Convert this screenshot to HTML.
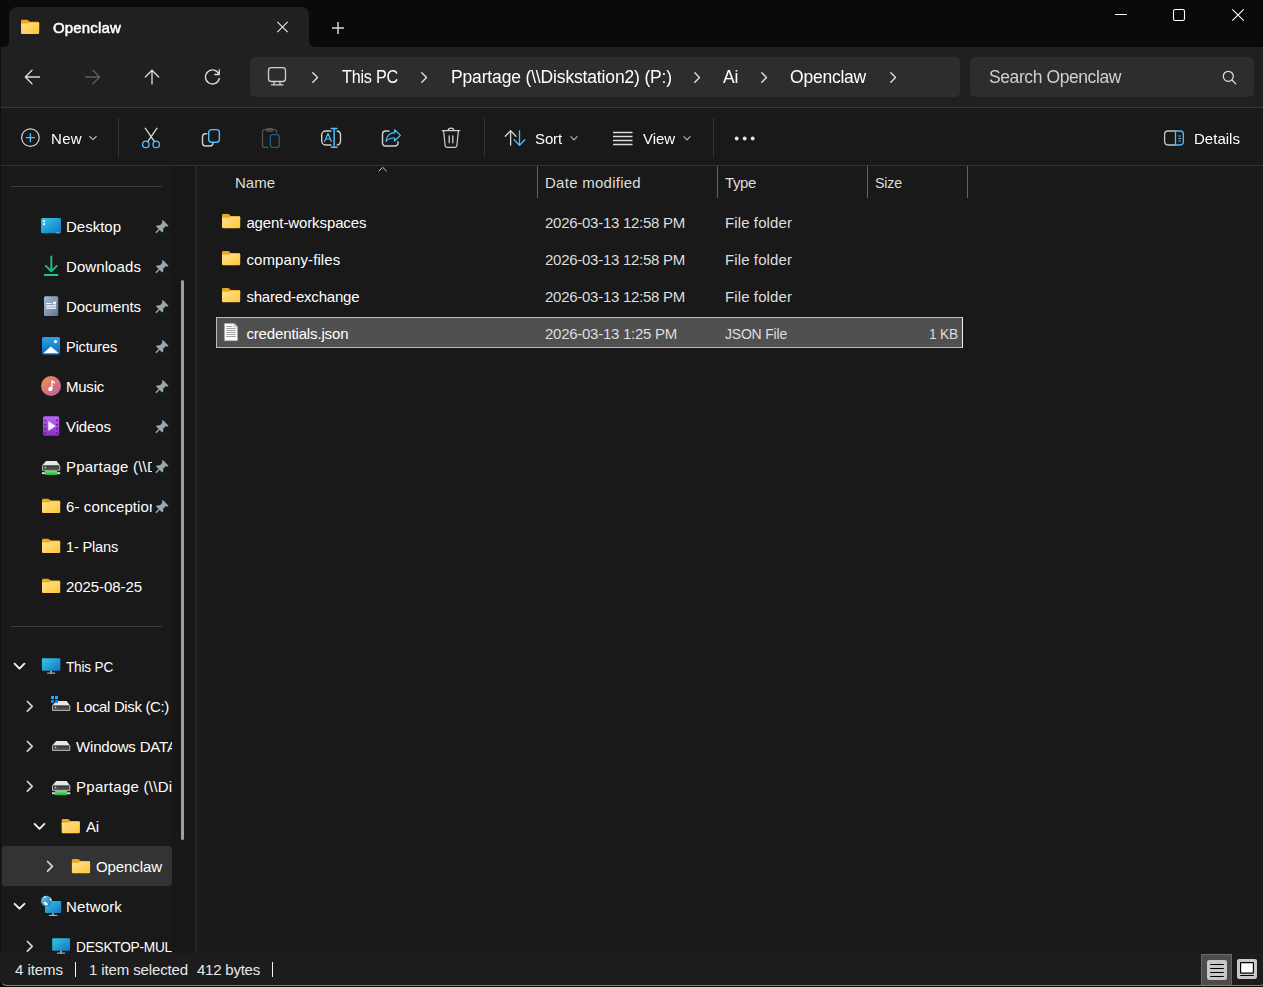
<!DOCTYPE html>
<html lang="en"><head><meta charset="utf-8"><title>Openclaw - File Explorer</title>
<style>
html,body{margin:0;padding:0;}
body{width:1263px;height:987px;overflow:hidden;background:#0a0a0a;position:relative;font-family:"Liberation Sans",sans-serif;}
.a{position:absolute;}
.t{position:absolute;white-space:pre;line-height:20px;height:20px;font-family:"Liberation Sans",sans-serif;}
svg{position:absolute;overflow:visible;}
.c{position:absolute;height:20px;overflow:hidden;}
.g{left:0;top:0;width:1263px;height:166px;will-change:transform;}
#win{left:0;top:0;width:1267px;height:986px;background:#191919;border-radius:0 0 7px 7px;overflow:hidden;}
#title{left:0;top:0;width:1263px;height:47px;background:#0a0a0a;}
#tab{left:9px;top:7px;width:300px;height:40px;background:#202020;border-radius:8px 8px 0 0;}
#nav{left:0;top:47px;width:1263px;height:60px;background:#202020;}
#navline{left:0;top:107px;width:1263px;height:1px;background:#393939;}
#cmdline{left:0;top:165px;width:1267px;height:1px;background:#333;}
.box{background:#2d2d2d;border-radius:5px;}
.vsep{width:1px;background:#333;}
.hsep{height:1px;background:#3c3c3c;}
.colsep{width:1px;background:#626262;top:166px;height:32px;}
</style></head><body>
<div class="a" id="win">
<div class="a" id="title"></div>
<div class="a" id="tab"></div>
<!-- concave tab corners -->
<svg style="left:1px;top:39px" width="8" height="8"><path d="M8 2V8H2A6 6 0 0 0 8 2Z" fill="#202020"/></svg>
<svg style="left:309px;top:39px" width="8" height="8"><path d="M0 2V8H6A6 6 0 0 1 0 2Z" fill="#202020"/></svg>
<div class="a" id="nav"></div>
<div class="a" id="navline"></div>
<div class="a" id="cmdline"></div>
<!-- address + search boxes -->
<div class="a box" style="left:250px;top:57px;width:710px;height:40px"></div>
<div class="a box" style="left:970px;top:57px;width:284px;height:40px"></div>
<!-- toolbar separators -->
<div class="a vsep" style="left:118px;top:118px;height:39px"></div>
<div class="a vsep" style="left:484px;top:118px;height:39px"></div>
<div class="a vsep" style="left:713px;top:118px;height:39px"></div>
<!-- sidebar -->
<div class="a" style="left:172px;top:166px;width:23px;height:787px;background:#171717"></div>
<div class="a" style="left:194px;top:166px;width:1px;height:787px;background:#141414"></div><div class="a" style="left:195px;top:166px;width:1px;height:787px;background:#2b2b2b"></div><div class="a" style="left:196px;top:166px;width:2px;height:787px;background:#202020"></div><div class="a" style="left:0;top:47px;width:1px;height:939px;background:#111"></div>
<div class="a hsep" style="left:11px;top:186px;width:151px"></div>
<div class="a hsep" style="left:11px;top:626px;width:151px"></div>
<div class="a" style="left:181px;top:280px;width:3px;height:560px;background:#9e9e9e;border-radius:2px"></div>
<div class="a" style="left:2px;top:846px;width:170px;height:39.500px;background:#333;border-radius:3px"></div>
<!-- column separators -->
<div class="a colsep" style="left:537px"></div>
<div class="a colsep" style="left:717px"></div>
<div class="a colsep" style="left:867px"></div>
<div class="a colsep" style="left:967px"></div>
<!-- selected row -->
<div class="a" style="left:216px;top:317px;width:747px;height:31px;background:#505050;box-sizing:border-box;border:1px solid #bcbcbc;border-right-color:#f0f0f0"></div>
<!-- status bar -->
<div class="a" style="left:0;top:953px;width:1263px;height:32px;background:#1c1c1c"></div>
<div class="a" style="left:75px;top:962px;width:1px;height:15px;background:#f4f4f4"></div>
<div class="a" style="left:272px;top:962px;width:1px;height:15px;background:#f4f4f4"></div>
<!-- ===== title bar icons ===== -->
<svg style="left:0;top:0" width="1263" height="48" viewBox="0 0 1263 48" fill="none">
  <!-- tab folder -->
  <defs>
    <linearGradient id="fb" x1="0" y1="0" x2="1" y2="1"><stop offset="0" stop-color="#ffe08a"/><stop offset="1" stop-color="#ffc537"/></linearGradient>
  </defs>
  <path d="M21.00 21.00a1.2 1.2 0 0 1 1.2-1.2h4.800c.5 0 .9.200 1.200.500l1.500 1.400H38.00a1.2 1.2 0 0 1 1.2 1.2V25.80H21.00z" fill="#eda820"/><path d="M21.00 23.50H27.60c.4 0 .7-.1 1-.4l.9-.7H38.00a1.2 1.2 0 0 1 1.2 1.2V32.80a1.2 1.2 0 0 1-1.2 1.2H22.20a1.2 1.2 0 0 1-1.2-1.2z" fill="url(#fb)"/>
  <!-- tab close -->
  <path d="M277.3 21.8l10.4 10.4M287.7 21.8l-10.4 10.4" stroke="#e4e4e4" stroke-width="1.1"/>
  <!-- new tab plus -->
  <path d="M332 28h12M338 22v12" stroke="#d6d6d6" stroke-width="1.5"/>
  <!-- window controls -->
  <path d="M1115 14.5h12" stroke="#fff" stroke-width="1"/>
  <rect x="1173.5" y="9.5" width="11" height="11" rx="1.8" stroke="#fff" stroke-width="1.1"/>
  <path d="M1232.3 9.3l11.4 11.4M1243.7 9.3l-11.4 11.4" stroke="#fff" stroke-width="1.1"/>
</svg>
<!-- ===== nav icons ===== -->
<svg style="left:0;top:48px" width="1263" height="60" viewBox="0 48 1263 60" fill="none" stroke-linecap="round" stroke-linejoin="round">
  <g stroke="#dedede" stroke-width="1.3">
    <path d="M39.5 77H25.5M32 70.3L25.3 77l6.700 6.700"/>
    <path d="M152 84V70.500M145.300 77L152 70.300l6.700 6.700"/>
    <path d="M218.900 74.200A7 7 0 1 0 219.300 78.500M219.300 70v4.500h-4.500"/>
  </g>
  <path d="M85.500 77h14M93 70.300l6.700 6.700-6.700 6.700" stroke="#5e5e5e" stroke-width="1.3"/>
  <!-- monitor -->
  <g stroke="#cfcfcf" stroke-width="1.3">
    <rect x="268.500" y="67.700" width="17" height="13.800" rx="2.800"/>
    <path d="M274 81.500v3.200M280 81.500v3.200M271.500 84.900h11.500"/>
  </g>
  <!-- chevrons -->
  <g stroke="#e0e0e0" stroke-width="1.4">
    <path d="M312.800 72.800l4.700 4.700-4.700 4.700"/>
    <path d="M421.800 72.800l4.700 4.700-4.700 4.700"/>
    <path d="M694.800 72.800l4.700 4.700-4.700 4.700"/>
    <path d="M761.800 72.800l4.700 4.700-4.700 4.700"/>
    <path d="M890.800 72.800l4.700 4.700-4.700 4.700"/>
  </g>
  <!-- search -->
  <g stroke="#e2e2e2" stroke-width="1.2">
    <circle cx="1228.300" cy="76.300" r="5"/>
    <path d="M1232 80l3.800 3.800"/>
  </g>
</svg>
<!-- ===== toolbar icons ===== -->
<svg style="left:0;top:108px" width="1263" height="58" viewBox="0 108 1263 58" fill="none" stroke-linecap="round" stroke-linejoin="round">
  <!-- new -->
  <circle cx="30.400" cy="137.600" r="8.800" stroke="#d6d6d6" stroke-width="1.2"/>
  <path d="M26.400 137.600h8M30.400 133.600v8" stroke="#4cc2ff" stroke-width="1.3"/>
  <path d="M89.800 136.500l3.200 3.200 3.200-3.200" stroke="#b4b4b4" stroke-width="1.2"/>
  <!-- cut -->
  <g stroke-width="1.3">
    <path d="M145.200 128.200l9.300 13.400M157 128.200l-9.300 13.400" stroke="#d8d8d8"/>
    <circle cx="145.800" cy="144.400" r="3.200" stroke="#4cc2ff"/>
    <circle cx="156.200" cy="144.400" r="3.200" stroke="#4cc2ff"/>
  </g>
  <!-- copy -->
  <path d="M206.800 133.700h-1.300a3 3 0 0 0-3 3v6.300a3 3 0 0 0 3 3h4.500a3 3 0 0 0 3-3v-0.200" stroke="#d0d0d0" stroke-width="1.4"/>
  <rect x="208.700" y="129.600" width="10.700" height="12.700" rx="3" stroke="#4cc2ff" stroke-width="1.4"/>
  <!-- paste (disabled) -->
  <g stroke="#555" stroke-width="1.200">
    <path d="M268 147.300h-3.500a2 2 0 0 1-2-2v-13.600a2 2 0 0 1 2-2h10a2 2 0 0 1 2 2v1.300"/>
    <rect x="266.400" y="128.500" width="6.400" height="2.600" rx="1.300"/>
  </g>
  <rect x="270.400" y="134.700" width="8.800" height="12.600" rx="2.200" stroke="#245e7c" stroke-width="1.300"/>
  <!-- rename -->
  <g stroke="#d0d0d0" stroke-width="1.400">
    <path d="M331 131h-5.300a4 4 0 0 0-4 4v6a4 4 0 0 0 4 4h5.300"/>
    <path d="M337.200 131h0a4 4 0 0 1 3.300 4v6a4 4 0 0 1-3.300 4"/>
  </g>
  <g stroke="#4cc2ff">
    <path d="M331.300 128.500h5.600M334.100 128.500v18.800M331.300 147.300h5.600" stroke-width="1.500"/>
    <path d="M324.600 141.400l3.400-8 3.400 8M325.800 139h4.400" stroke-width="1.200"/>
  </g>
  <!-- share -->
  <path d="M389 131h-3.300a3.200 3.200 0 0 0-3.200 3.200v8.600a3.200 3.200 0 0 0 3.200 3.200h9.100a3.200 3.200 0 0 0 3.200-3.200v-1" stroke="#d0d0d0" stroke-width="1.400"/>
  <path d="M394.600 129.800l5.800 5.600-5.800 5.600v-3c-4.200-.2-6.800 1.100-8.600 3.400.4-4.600 3.100-8.200 8.600-8.700z" stroke="#4cc2ff" stroke-width="1.200"/>
  <!-- delete -->
  <g stroke="#d0d0d0" stroke-width="1.200">
    <path d="M442.200 130.600h17.600M448.200 130.400a2.800 2.200 0 0 1 5.600 0"/>
    <path d="M443.600 130.800l1.500 14.400a2.400 2.400 0 0 0 2.400 2.100h7a2.400 2.400 0 0 0 2.400-2.100l1.500-14.400"/>
    <path d="M449.200 135.800v7M452.800 135.800v7" stroke-width="1.300"/>
  </g>
  <!-- sort -->
  <path d="M510.600 145.200v-14.600M505.300 136.200l5.300-5.600 5.300 5.600" stroke="#d8d8d8" stroke-width="1.300"/>
  <path d="M519.500 130.800v14.600M514.200 139.800l5.300 5.600 5.300-5.600" stroke="#4cc2ff" stroke-width="1.300"/>
  <path d="M570.900 136.700l3.100 3.100 3.100-3.100" stroke="#b4b4b4" stroke-width="1.200"/>
  <!-- view -->
  <path d="M613 132.500h19.500M613 136.500h19.500M613 140.500h19.500M613 144.500h19.500" stroke="#dcdcdc" stroke-width="1.500" stroke-linecap="butt"/>
  <path d="M683.900 136.700l3.100 3.100 3.100-3.100" stroke="#b4b4b4" stroke-width="1.200"/>
  <!-- more -->
  <g fill="#e8e8e8"><circle cx="736.700" cy="138.500" r="1.900"/><circle cx="744.700" cy="138.500" r="1.900"/><circle cx="752.700" cy="138.500" r="1.900"/></g>
  <!-- details -->
  <path d="M1175.500 131h-7.500a3.400 3.400 0 0 0-3.400 3.400v7.200a3.400 3.400 0 0 0 3.400 3.400h7.500" stroke="#c4c4c4" stroke-width="1.300"/>
  <path d="M1175.500 131h4.500a3.400 3.400 0 0 1 3.400 3.400v7.200a3.400 3.400 0 0 1-3.400 3.400h-4.500z" stroke="#4cc2ff" stroke-width="1.300"/>
  <path d="M1178.300 136h2.600M1178.300 138.500h2.600M1178.300 141h2.600" stroke="#4cc2ff" stroke-width="1.200" stroke-linecap="butt"/>
</svg>
<svg style="left:0;top:166px" width="200" height="787" viewBox="0 166 200 787">
<defs>
<linearGradient id="gFold" x1="0" y1="0" x2="1" y2="1"><stop offset="0" stop-color="#ffe38f"/><stop offset="1" stop-color="#ffc63b"/></linearGradient>
<linearGradient id="gMon" x1="0" y1="0" x2="1" y2="1"><stop offset="0" stop-color="#33cbe6"/><stop offset="1" stop-color="#1473c4"/></linearGradient>
<linearGradient id="gDoc" x1="0" y1="0" x2="1" y2="1"><stop offset="0" stop-color="#a9bbd2"/><stop offset="1" stop-color="#5d7698"/></linearGradient>
<linearGradient id="gPic" x1="0" y1="0" x2="0" y2="1"><stop offset="0" stop-color="#2aa3ee"/><stop offset="1" stop-color="#0f68b8"/></linearGradient>
<linearGradient id="gMus" x1="0" y1="0" x2="1" y2="1"><stop offset="0" stop-color="#f4934a"/><stop offset="1" stop-color="#b95aa8"/></linearGradient>
<linearGradient id="gVid" x1="0" y1="0" x2="0" y2="1"><stop offset="0" stop-color="#b968f2"/><stop offset="1" stop-color="#8a2fc6"/></linearGradient>
<linearGradient id="gDl" x1="0" y1="0" x2="0" y2="1"><stop offset="0" stop-color="#2cc47f"/><stop offset="1" stop-color="#12a0a2"/></linearGradient>
<linearGradient id="gDrv" x1="0" y1="0" x2="0" y2="1"><stop offset="0" stop-color="#333"/><stop offset="1" stop-color="#5c5c5c"/></linearGradient>
<linearGradient id="gGrn" x1="0" y1="0" x2="0" y2="1"><stop offset="0" stop-color="#5cee6c"/><stop offset="1" stop-color="#22b444"/></linearGradient>
<linearGradient id="gGlobe" x1="0" y1="0" x2="1" y2="1"><stop offset="0" stop-color="#7cc4ea"/><stop offset=".5" stop-color="#3d9cd2"/><stop offset="1" stop-color="#2a74b0"/></linearGradient>
</defs>
<rect x="41" y="218" width="20" height="15.300" rx="1.500" fill="url(#gMon)"/>
<rect x="43" y="220.300" width="2" height="1.900" fill="#f2fbff"/><rect x="43" y="223.200" width="2" height="1.900" fill="#f2fbff"/>
<rect x="56.500" y="232.300" width="1" height="1" fill="#cfe8f8"/><rect x="58.500" y="232.300" width="1" height="1" fill="#cfe8f8"/>
<path d="M51.300 256.400v14.400M45.800 265.900l5.500 5.300 5.500-5.300" fill="none" stroke="#1fb58a" stroke-width="2" stroke-linecap="round" stroke-linejoin="round"/>
<path d="M44 275h14.200" stroke="#27c28a" stroke-width="2" fill="none"/>
<rect x="44" y="296.200" width="14.200" height="19.800" rx="1.500" fill="url(#gDoc)"/>
<path d="M46.200 303.500h5.600M46.200 305.900h9.800M46.200 308.200h9.800" stroke="#ffffff" stroke-width="1.200" fill="none"/><rect x="53" y="301.700" width="3" height="2.700" fill="#f4f7fb"/>
<rect x="42" y="337" width="18" height="17.800" rx="1.800" fill="url(#gPic)"/>
<path d="M43.300 353.200l7.600-6.600 7.900 6.600z" fill="#fff"/><circle cx="55.500" cy="341.600" r="1.600" fill="#fff"/>
<circle cx="51" cy="386" r="10" fill="url(#gMus)"/>
<path d="M51.300 380.300c1.800.3 3 .9 3.600 2.100v1.500c-.8-.9-1.600-1.300-2.400-1.400v6.500a2.100 2.100 0 1 1-1.200-1.900z" fill="#fff"/>
<rect x="43" y="416.200" width="16.200" height="19.600" rx="1.800" fill="url(#gVid)"/>
<path d="M48.300 421l7.500 5-7.500 5z" fill="#f6eaff"/>
<rect x="44.400" y="419.6" width="1.700" height="1.700" rx=".4" fill="#5a1c8c"/><rect x="56.100" y="419.6" width="1.700" height="1.700" rx=".4" fill="#5a1c8c"/>
<rect x="44.400" y="423.8" width="1.700" height="1.700" rx=".4" fill="#5a1c8c"/><rect x="56.100" y="423.8" width="1.700" height="1.700" rx=".4" fill="#5a1c8c"/>
<rect x="44.400" y="428.0" width="1.700" height="1.700" rx=".4" fill="#5a1c8c"/><rect x="56.100" y="428.0" width="1.700" height="1.700" rx=".4" fill="#5a1c8c"/>
<rect x="44.400" y="432.2" width="1.700" height="1.700" rx=".4" fill="#5a1c8c"/><rect x="56.100" y="432.2" width="1.700" height="1.700" rx=".4" fill="#5a1c8c"/>
<path d="M46.10 460.90h10.500l3 4.200h-17.100z" fill="#e6e6e8"/><rect x="41.90" y="464.90" width="18.300" height="5.9" rx=".8" fill="#b4b4b4"/><rect x="42.90" y="465.40" width="16.300" height="4.600" fill="url(#gDrv)"/><circle cx="45.40" cy="467.50" r="1" fill="#4cf060"/><rect x="41.90" y="472.20" width="18.300" height="1.900" fill="#dcdcdc"/><rect x="44.90" y="470.80" width="12.200" height="4.300" rx=".5" fill="url(#gGrn)"/>
<path d="M42.00 499.90a1.2 1.2 0 0 1 1.2-1.2h4.800c.5 0 .9.200 1.200.500l1.500 1.400H59.00a1.2 1.2 0 0 1 1.2 1.2V504.70H42.00z" fill="#eda820"/><path d="M42.00 502.40H48.60c.4 0 .7-.1 1-.4l.9-.7H59.00a1.2 1.2 0 0 1 1.2 1.2V511.70a1.2 1.2 0 0 1-1.2 1.2H43.20a1.2 1.2 0 0 1-1.2-1.2z" fill="url(#gFold)"/>
<path d="M42.00 539.90a1.2 1.2 0 0 1 1.2-1.2h4.800c.5 0 .9.200 1.200.500l1.500 1.400H59.00a1.2 1.2 0 0 1 1.2 1.2V544.70H42.00z" fill="#eda820"/><path d="M42.00 542.40H48.60c.4 0 .7-.1 1-.4l.9-.7H59.00a1.2 1.2 0 0 1 1.2 1.2V551.70a1.2 1.2 0 0 1-1.2 1.2H43.20a1.2 1.2 0 0 1-1.2-1.2z" fill="url(#gFold)"/>
<path d="M42.00 579.90a1.2 1.2 0 0 1 1.2-1.2h4.800c.5 0 .9.200 1.200.500l1.500 1.400H59.00a1.2 1.2 0 0 1 1.2 1.2V584.70H42.00z" fill="#eda820"/><path d="M42.00 582.40H48.60c.4 0 .7-.1 1-.4l.9-.7H59.00a1.2 1.2 0 0 1 1.2 1.2V591.70a1.2 1.2 0 0 1-1.2 1.2H43.20a1.2 1.2 0 0 1-1.2-1.2z" fill="url(#gFold)"/>
<g transform="translate(160.80 227.75) rotate(45)" fill="#9aa7af" stroke="none"><path d="M-4-7h8v1.400l-1.600 1v3.400l2 2.400v1.200h-8.800v-1.200l2-2.400v-3.400l-1.600-1z"/><rect x="-.75" y="2" width="1.500" height="5"/></g>
<g transform="translate(160.80 267.75) rotate(45)" fill="#9aa7af" stroke="none"><path d="M-4-7h8v1.400l-1.600 1v3.400l2 2.400v1.200h-8.800v-1.200l2-2.400v-3.400l-1.600-1z"/><rect x="-.75" y="2" width="1.500" height="5"/></g>
<g transform="translate(160.80 307.75) rotate(45)" fill="#9aa7af" stroke="none"><path d="M-4-7h8v1.400l-1.600 1v3.400l2 2.400v1.200h-8.800v-1.200l2-2.400v-3.400l-1.600-1z"/><rect x="-.75" y="2" width="1.500" height="5"/></g>
<g transform="translate(160.80 347.75) rotate(45)" fill="#9aa7af" stroke="none"><path d="M-4-7h8v1.400l-1.600 1v3.400l2 2.400v1.200h-8.800v-1.200l2-2.400v-3.400l-1.600-1z"/><rect x="-.75" y="2" width="1.500" height="5"/></g>
<g transform="translate(160.80 387.75) rotate(45)" fill="#9aa7af" stroke="none"><path d="M-4-7h8v1.400l-1.600 1v3.400l2 2.400v1.200h-8.800v-1.200l2-2.400v-3.400l-1.600-1z"/><rect x="-.75" y="2" width="1.500" height="5"/></g>
<g transform="translate(160.80 427.75) rotate(45)" fill="#9aa7af" stroke="none"><path d="M-4-7h8v1.400l-1.600 1v3.400l2 2.400v1.200h-8.800v-1.200l2-2.400v-3.400l-1.600-1z"/><rect x="-.75" y="2" width="1.500" height="5"/></g>
<g transform="translate(160.80 467.75) rotate(45)" fill="#9aa7af" stroke="none"><path d="M-4-7h8v1.400l-1.600 1v3.400l2 2.400v1.200h-8.800v-1.200l2-2.400v-3.400l-1.600-1z"/><rect x="-.75" y="2" width="1.500" height="5"/></g>
<g transform="translate(160.80 507.75) rotate(45)" fill="#9aa7af" stroke="none"><path d="M-4-7h8v1.400l-1.600 1v3.400l2 2.400v1.200h-8.800v-1.200l2-2.400v-3.400l-1.600-1z"/><rect x="-.75" y="2" width="1.500" height="5"/></g>
<path d="M14.6 663.7l4.900 4.900 4.900-4.900" fill="none" stroke="#f4f4f4" stroke-width="1.900" stroke-linecap="round" stroke-linejoin="round"/>
<rect x="41.9" y="658.2" width="18.4" height="12.6" rx="1" fill="url(#gMon)"/><rect x="50.3" y="670.8" width="1.600" height="2" fill="#b8b8b8"/><rect x="47.1" y="672.6" width="8" height="1" fill="#c8c8c8"/>
<path d="M27.4 701.5l4.800 4.800-4.800 4.800" fill="none" stroke="#d4d4d4" stroke-width="1.700" stroke-linecap="round" stroke-linejoin="round"/>
<path d="M56.20 701.00h10.500l3 4.200h-17.100z" fill="#e6e6e8"/><rect x="52.00" y="705.00" width="18.300" height="6.1" rx=".8" fill="#b4b4b4"/><rect x="53.00" y="705.50" width="16.300" height="4.600" fill="url(#gDrv)"/><circle cx="55.50" cy="707.60" r="1" fill="#4cf060"/><rect x="51.00" y="696.00" width="3" height="3" fill="#1ba6ff"/><rect x="55.00" y="696.00" width="3" height="3" fill="#1ba6ff"/><rect x="51.00" y="700.00" width="3" height="3" fill="#0c8cf0"/><rect x="55.00" y="700.00" width="3" height="3" fill="#0c84e8"/>
<path d="M27.4 741.5l4.800 4.800-4.800 4.800" fill="none" stroke="#d4d4d4" stroke-width="1.700" stroke-linecap="round" stroke-linejoin="round"/>
<path d="M56.20 741.00h10.500l3 4.200h-17.100z" fill="#e6e6e8"/><rect x="52.00" y="745.00" width="18.300" height="6.1" rx=".8" fill="#b4b4b4"/><rect x="53.00" y="745.50" width="16.300" height="4.600" fill="url(#gDrv)"/><circle cx="55.50" cy="747.60" r="1" fill="#4cf060"/>
<path d="M27.4 781.5l4.800 4.800-4.800 4.800" fill="none" stroke="#d4d4d4" stroke-width="1.700" stroke-linecap="round" stroke-linejoin="round"/>
<path d="M56.20 781.00h10.500l3 4.200h-17.100z" fill="#e6e6e8"/><rect x="52.00" y="785.00" width="18.300" height="5.9" rx=".8" fill="#b4b4b4"/><rect x="53.00" y="785.50" width="16.300" height="4.600" fill="url(#gDrv)"/><circle cx="55.50" cy="787.60" r="1" fill="#4cf060"/><rect x="52.00" y="792.30" width="18.300" height="1.900" fill="#dcdcdc"/><rect x="55.00" y="790.90" width="12.200" height="4.300" rx=".5" fill="url(#gGrn)"/>
<path d="M34.6 823.9l4.900 4.900 4.900-4.900" fill="none" stroke="#f4f4f4" stroke-width="1.900" stroke-linecap="round" stroke-linejoin="round"/>
<path d="M61.70 820.30a1.2 1.2 0 0 1 1.2-1.2h4.800c.5 0 .9.200 1.200.500l1.500 1.400H78.70a1.2 1.2 0 0 1 1.2 1.2V825.10H61.70z" fill="#eda820"/><path d="M61.70 822.80H68.30c.4 0 .7-.1 1-.4l.9-.7H78.70a1.2 1.2 0 0 1 1.2 1.2V832.10a1.2 1.2 0 0 1-1.2 1.2H62.90a1.2 1.2 0 0 1-1.2-1.2z" fill="url(#gFold)"/>
<path d="M47.6 861.5l4.800 4.800-4.800 4.800" fill="none" stroke="#d4d4d4" stroke-width="1.700" stroke-linecap="round" stroke-linejoin="round"/>
<path d="M71.90 860.20a1.2 1.2 0 0 1 1.2-1.2h4.800c.5 0 .9.200 1.200.500l1.500 1.400H88.90a1.2 1.2 0 0 1 1.2 1.2V865.00H71.90z" fill="#eda820"/><path d="M71.90 862.70H78.50c.4 0 .7-.1 1-.4l.9-.7H88.90a1.2 1.2 0 0 1 1.2 1.2V872.00a1.2 1.2 0 0 1-1.2 1.2H73.10a1.2 1.2 0 0 1-1.2-1.2z" fill="url(#gFold)"/>
<path d="M14.6 903.8l4.900 4.900 4.900-4.900" fill="none" stroke="#f4f4f4" stroke-width="1.900" stroke-linecap="round" stroke-linejoin="round"/>
<rect x="45.0" y="901.0" width="16.2" height="12.1" rx="1" fill="url(#gMon)"/><rect x="52.3" y="913.1" width="1.600" height="2" fill="#b8b8b8"/><rect x="49.1" y="914.9" width="8" height="1" fill="#c8c8c8"/>
<circle cx="46.450" cy="901.200" r="5.500" fill="url(#gGlobe)"/>
<path d="M44.200 901.600l2.200.6 1.800 2-1.500 1.300-2-.7-1.100-1.800z" fill="#e4f2fa"/>
<path d="M50 897.800c1.200.8 1.800 2 1.800 3.400l-1.200-.4-.9-1.600z" fill="#dceef8"/>
<path d="M42.800 897.800c1-1.200 2.400-1.900 3.800-2l-.8 1.400-2 1z" fill="#cfe8f6"/>
<path d="M27.4 941.5l4.800 4.800-4.800 4.800" fill="none" stroke="#d4d4d4" stroke-width="1.700" stroke-linecap="round" stroke-linejoin="round"/>
<rect x="52.2" y="938.2" width="17.8" height="12.6" rx="1" fill="url(#gMon)"/><rect x="60.3" y="950.8" width="1.600" height="2" fill="#b8b8b8"/><rect x="57.1" y="952.6" width="8" height="1" fill="#c8c8c8"/>
</svg>
<svg style="left:197px;top:166px" width="800" height="200" viewBox="197 166 800 200">
<path d="M222.00 215.30a1.2 1.2 0 0 1 1.2-1.2h4.800c.5 0 .9.200 1.200.500l1.500 1.400H239.00a1.2 1.2 0 0 1 1.2 1.2V220.10H222.00z" fill="#eda820"/><path d="M222.00 217.80H228.60c.4 0 .7-.1 1-.4l.9-.7H239.00a1.2 1.2 0 0 1 1.2 1.2V227.10a1.2 1.2 0 0 1-1.2 1.2H223.20a1.2 1.2 0 0 1-1.2-1.2z" fill="url(#gFold)"/>
<path d="M222.00 252.30a1.2 1.2 0 0 1 1.2-1.2h4.800c.5 0 .9.200 1.200.500l1.500 1.400H239.00a1.2 1.2 0 0 1 1.2 1.2V257.10H222.00z" fill="#eda820"/><path d="M222.00 254.80H228.60c.4 0 .7-.1 1-.4l.9-.7H239.00a1.2 1.2 0 0 1 1.2 1.2V264.10a1.2 1.2 0 0 1-1.2 1.2H223.20a1.2 1.2 0 0 1-1.2-1.2z" fill="url(#gFold)"/>
<path d="M222.00 289.30a1.2 1.2 0 0 1 1.2-1.2h4.800c.5 0 .9.200 1.200.500l1.500 1.400H239.00a1.2 1.2 0 0 1 1.2 1.2V294.10H222.00z" fill="#eda820"/><path d="M222.00 291.80H228.60c.4 0 .7-.1 1-.4l.9-.7H239.00a1.2 1.2 0 0 1 1.2 1.2V301.10a1.2 1.2 0 0 1-1.2 1.2H223.20a1.2 1.2 0 0 1-1.2-1.2z" fill="url(#gFold)"/>
<path d="M224.500 323.400h9.700l3.300 3.300v14h-13z" fill="#fbfbfb" stroke="#a8a8a8" stroke-width=".7"/>
<path d="M234.200 323.400v3.300h3.300" fill="#dcdcdc" stroke="#a8a8a8" stroke-width=".7"/>
<path d="M226.300 326.500h6M226.300 328.500h9.400M226.300 330.500h9.400M226.300 332.500h9.400M226.300 334.500h9.400M226.300 336.500h9.400" stroke="#969696" stroke-width=".9" fill="none"/>
<path d="M378.700 171.200l4-3.800 4 3.800" fill="none" stroke="#c8c8c8" stroke-width="1"/>
</svg>
<svg style="left:1190px;top:953px" width="73" height="33" viewBox="1190 953 73 33">
<rect x="1201.500" y="954.500" width="30" height="32" fill="#4d4d4d" stroke="#686868" stroke-width="1"/>
<rect x="1207" y="960" width="20" height="20" rx="2.200" fill="#c9c7c7"/>
<path d="M1210.200 964.500h13.600M1210.200 968.500h13.600M1210.200 972.500h13.600M1210.200 976.500h13.600" stroke="#000" stroke-width="1.100"/>
<rect x="1237" y="959" width="20" height="20" rx="2.200" fill="#c9c7c7"/>
<rect x="1240.600" y="962.600" width="12.800" height="10.600" rx=".5" fill="#fff" stroke="#000" stroke-width="1.200"/>
<path d="M1240.200 975.500h13.600" stroke="#000" stroke-width="1.100"/>
</svg>
<div class="a g">
<span class="t" style="left:53.0px;top:17.5px;font-size:15px;color:#fff;font-weight:400;letter-spacing:0.162px;-webkit-text-stroke:0.5px #fff;">Openclaw</span>
<span class="t" style="left:342.3px;top:67.0px;font-size:17.5px;color:#fff;font-weight:400;letter-spacing:-0.240px;transform:scaleX(0.9248);transform-origin:0 50%;">This PC</span>
<span class="t" style="left:451.0px;top:67.0px;font-size:17.5px;color:#fff;font-weight:400;letter-spacing:-0.155px;">Ppartage (\\Diskstation2) (P:)</span>
<span class="t" style="left:723.0px;top:67.0px;font-size:17.5px;color:#fff;font-weight:400;letter-spacing:-0.281px;">Ai</span>
<span class="t" style="left:790.0px;top:67.0px;font-size:17.5px;color:#fff;font-weight:400;letter-spacing:-0.229px;">Openclaw</span>
<span class="t" style="left:989.0px;top:67.0px;font-size:17.5px;color:#cfcfcf;font-weight:400;letter-spacing:-0.409px;">Search Openclaw</span>
<span class="t" style="left:51.0px;top:129.0px;font-size:15px;color:#fff;font-weight:400;letter-spacing:0.328px;">New</span>
<span class="t" style="left:535.0px;top:129.0px;font-size:15px;color:#fff;font-weight:400;letter-spacing:-0.129px;">Sort</span>
<span class="t" style="left:643.0px;top:129.0px;font-size:15px;color:#fff;font-weight:400;letter-spacing:-0.062px;">View</span>
<span class="t" style="left:1194.0px;top:129.0px;font-size:15px;color:#fff;font-weight:400;letter-spacing:0.020px;">Details</span>
</div>
<span class="t" style="left:235.0px;top:173.0px;font-size:15px;color:#dedede;font-weight:400;letter-spacing:-0.004px;">Name</span>
<span class="t" style="left:545.0px;top:173.0px;font-size:15px;color:#dedede;font-weight:400;letter-spacing:0.264px;">Date modified</span>
<span class="t" style="left:725.0px;top:173.0px;font-size:15px;color:#dedede;font-weight:400;letter-spacing:-0.383px;">Type</span>
<span class="t" style="left:875.0px;top:173.0px;font-size:15px;color:#dedede;font-weight:400;letter-spacing:-0.192px;transform:scaleX(0.9501);transform-origin:0 50%;">Size</span>
<span class="t" style="left:246.4px;top:213.0px;font-size:15px;color:#fff;font-weight:400;letter-spacing:-0.108px;">agent-workspaces</span>
<span class="t" style="left:545.0px;top:213.0px;font-size:15px;color:#dedede;font-weight:400;letter-spacing:-0.269px;">2026-03-13 12:58 PM</span>
<span class="t" style="left:725.0px;top:213.0px;font-size:15px;color:#dedede;font-weight:400;letter-spacing:0.104px;">File folder</span>
<span class="t" style="left:246.4px;top:250.0px;font-size:15px;color:#fff;font-weight:400;letter-spacing:0.112px;">company-files</span>
<span class="t" style="left:545.0px;top:250.0px;font-size:15px;color:#dedede;font-weight:400;letter-spacing:-0.269px;">2026-03-13 12:58 PM</span>
<span class="t" style="left:725.0px;top:250.0px;font-size:15px;color:#dedede;font-weight:400;letter-spacing:0.104px;">File folder</span>
<span class="t" style="left:246.4px;top:287.0px;font-size:15px;color:#fff;font-weight:400;letter-spacing:-0.195px;">shared-exchange</span>
<span class="t" style="left:545.0px;top:287.0px;font-size:15px;color:#dedede;font-weight:400;letter-spacing:-0.269px;">2026-03-13 12:58 PM</span>
<span class="t" style="left:725.0px;top:287.0px;font-size:15px;color:#dedede;font-weight:400;letter-spacing:0.104px;">File folder</span>
<span class="t" style="left:246.4px;top:324.0px;font-size:15px;color:#fff;font-weight:400;letter-spacing:-0.140px;">credentials.json</span>
<span class="t" style="left:545.0px;top:324.0px;font-size:15px;color:#dedede;font-weight:400;letter-spacing:-0.265px;">2026-03-13 1:25 PM</span>
<span class="t" style="left:725.0px;top:324.0px;font-size:15px;color:#dedede;font-weight:400;letter-spacing:-0.204px;transform:scaleX(0.9322);transform-origin:0 50%;">JSON File</span>
<span class="t" style="left:929.0px;top:324.0px;font-size:15px;color:#dedede;font-weight:400;letter-spacing:-0.222px;transform:scaleX(0.9165);transform-origin:0 50%;">1 KB</span>
<span class="t" style="left:66.0px;top:217.0px;font-size:15px;color:#fff;font-weight:400;letter-spacing:-0.004px;">Desktop</span>
<span class="t" style="left:66.0px;top:257.0px;font-size:15px;color:#fff;font-weight:400;letter-spacing:0.087px;">Downloads</span>
<span class="t" style="left:66.0px;top:297.0px;font-size:15px;color:#fff;font-weight:400;letter-spacing:-0.097px;">Documents</span>
<span class="t" style="left:66.0px;top:337.0px;font-size:15px;color:#fff;font-weight:400;letter-spacing:-0.175px;transform:scaleX(0.9662);transform-origin:0 50%;">Pictures</span>
<span class="t" style="left:66.0px;top:377.0px;font-size:15px;color:#fff;font-weight:400;letter-spacing:-0.234px;">Music</span>
<span class="t" style="left:66.0px;top:417.0px;font-size:15px;color:#fff;font-weight:400;letter-spacing:-0.099px;">Videos</span>
<div class="c" style="left:66.0px;top:457.0px;width:86.0px"><span class="t" style="left:0;top:0;font-size:15px;color:#fff;font-weight:400;letter-spacing:0.217px;">Ppartage (\\Diskstation2) (P:)</span></div>
<div class="c" style="left:66.0px;top:497.0px;width:86.0px"><span class="t" style="left:0;top:0;font-size:15px;color:#fff;font-weight:400;letter-spacing:0.107px;">6- conception</span></div>
<span class="t" style="left:66.0px;top:537.0px;font-size:15px;color:#fff;font-weight:400;letter-spacing:-0.177px;transform:scaleX(0.9699);transform-origin:0 50%;">1- Plans</span>
<span class="t" style="left:66.0px;top:577.0px;font-size:15px;color:#fff;font-weight:400;letter-spacing:-0.073px;">2025-08-25</span>
<span class="t" style="left:66.0px;top:657.0px;font-size:15px;color:#fff;font-weight:400;letter-spacing:-0.210px;transform:scaleX(0.9061);transform-origin:0 50%;">This PC</span>
<span class="t" style="left:76.0px;top:697.0px;font-size:15px;color:#fff;font-weight:400;letter-spacing:-0.357px;">Local Disk (C:)</span>
<div class="c" style="left:76.0px;top:737.0px;width:96.0px"><span class="t" style="left:0;top:0;font-size:15px;color:#fff;font-weight:400;letter-spacing:-0.173px;">Windows DATA (D:)</span></div>
<div class="c" style="left:76.0px;top:777.0px;width:96.0px"><span class="t" style="left:0;top:0;font-size:15px;color:#fff;font-weight:400;letter-spacing:0.282px;">Ppartage (\\Diskstation2) (P:)</span></div>
<span class="t" style="left:86.0px;top:817.0px;font-size:15px;color:#fff;font-weight:400;letter-spacing:-0.172px;">Ai</span>
<span class="t" style="left:96.0px;top:857.0px;font-size:15px;color:#fff;font-weight:400;letter-spacing:-0.088px;">Openclaw</span>
<span class="t" style="left:66.0px;top:897.0px;font-size:15px;color:#fff;font-weight:400;letter-spacing:0.141px;">Network</span>
<div class="c" style="left:76.0px;top:937.0px;width:96.0px"><span class="t" style="left:0;top:0;font-size:15px;color:#fff;font-weight:400;letter-spacing:-0.269px;transform:scaleX(0.9132);transform-origin:0 50%;">DESKTOP-MUL</span></div>
<span class="t" style="left:15.0px;top:959.5px;font-size:15px;color:#e8e8e8;font-weight:400;letter-spacing:-0.051px;">4 items</span>
<span class="t" style="left:89.0px;top:959.5px;font-size:15px;color:#e8e8e8;font-weight:400;letter-spacing:-0.126px;">1 item selected</span>
<span class="t" style="left:197.0px;top:959.5px;font-size:15px;color:#e8e8e8;font-weight:400;letter-spacing:-0.227px;">412 bytes</span>
</div>
<!-- orange accent line -->
<div class="a" style="left:0;top:976px;width:1267px;height:10px;border:1px solid #e0661c;border-top:none;border-radius:0 0 7px 7px;box-sizing:border-box;border-left-color:transparent;border-right-color:transparent"></div>
</body></html>
